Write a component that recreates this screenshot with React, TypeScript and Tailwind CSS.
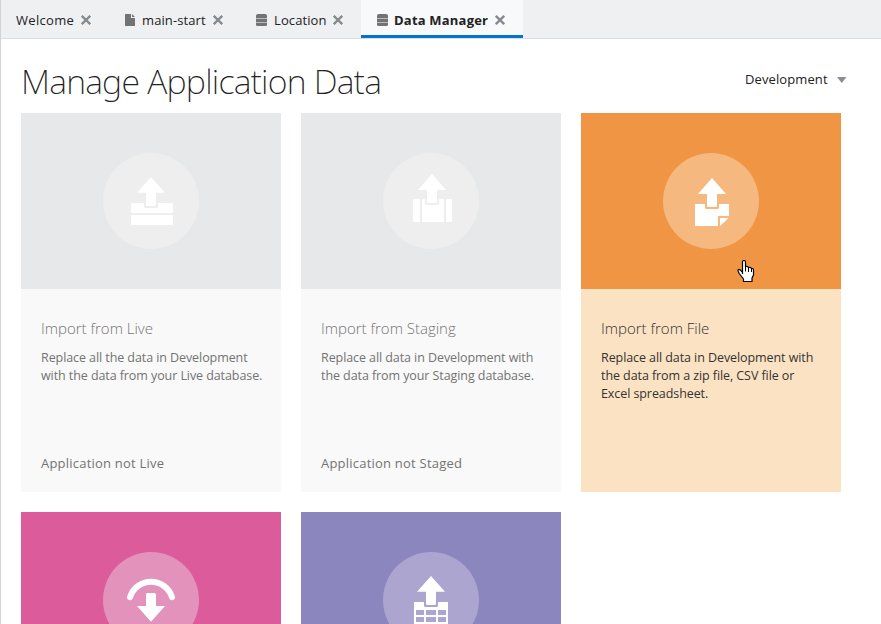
import type { ReactNode } from "react";

function CloseIcon() {
  return (
    <svg width="10" height="10" viewBox="0 0 10 10" className="shrink-0" stroke="#858a8f" strokeWidth="2.3">
      <path d="M0.8 0.8 9.2 9.2M9.2 0.8 0.8 9.2" />
    </svg>
  );
}

function DatabaseIcon() {
  return (
    <svg width="11" height="12" viewBox="0 0 11 12" className="shrink-0" fill="#737373">
      <path d="M0 4V1.500Q0 0 2 0h7q2 0 2 1.500V4z" />
      <path d="M0 5h11v3H0zM0 9h11v2q0 1-1.500 1h-8Q0 12 0 11z" />
      <path d="M0 4h11v1H0zM0 8h11v1H0z" fill="#b9babb" />
    </svg>
  );
}

function FileIcon() {
  return (
    <svg width="10" height="12" viewBox="0 0 10 12" className="shrink-0" fill="#737373">
      <path d="M0 0h6v4h4v8H0zM7 0l3 3H7z" />
    </svg>
  );
}

const liveIcon = (
  <>
    <path d="M48 24 62 39.700H53V51.500Q53 53 51.500 53h-7Q43 53 43 51.500V39.700H34z" />
    <path d="M29 50H41v3.500q0 1.500 1.500 1.500h11q1.500 0 1.500-1.500V50H69q1 0 1 1v8q0 1-1 1H29q-1 0-1-1v-8q0-1 1-1z" />
    <rect x="28" y="62" width="42" height="10" rx="1" />
  </>
);

const stagingIcon = (
  <>
    <path d="M49 21 63 37H54V48.500Q54 50 52.500 50h-7Q44 50 44 48.500V37H35z" />
    <path d="M31 46h6v23h-6q-1 0-1-1V47q0-1 1-1zM39 46h3v4.500q0 1.500 1.500 1.500h11q1.500 0 1.500-1.500V46h5v23H39zM63 46h5q1 0 1 1v21q0 1-1 1h-5z" />
  </>
);

const fileImportIcon = (
  <>
    <path d="M49 25 63 41H54V52.500Q54 54 52.500 54h-7Q44 54 44 52.500V41H35z" />
    <path d="M32 51H42v3.500q0 1.500 1.500 1.500h11q1.500 0 1.500-1.500V51H66V63H55V73H32zM57 65h8.500L57 73z" />
  </>
);

const exportIcon = (
  <>
    <path d="M27 45.200a22 22 0 0 1 42 0" fill="none" stroke="white" strokeWidth="6" strokeLinecap="round" />
    <path d="M43 54V42.500Q43 41 44.500 41h7Q53 41 53 42.500V54h9L48 69.700 34 54z" />
  </>
);

const spreadsheetIcon = (
  <>
    <path d="M48 24 62 39.700H53V51.500Q53 53 51.500 53h-7Q43 53 43 51.500V39.700H34z" />
    <path
      fillRule="evenodd"
      d="M31 50H41v3.500q0 1.500 1.500 1.500h11q1.500 0 1.500-1.500V50H65V80H31zM33 58v5h8v-5zM43 58v5h10v-5zM55 58v5h8v-5zM33 65v5h8v-5zM43 65v5h10v-5zM55 65v5h8v-5zM33 72v5h8v-5zM43 72v5h10v-5zM55 72v5h8v-5z"
    />
  </>
);

function HandCursor() {
  return (
    <svg width="18" height="23" viewBox="0 0 18 23" className="absolute left-[156px] top-[147px]">
      <path
        d="M5.500 14V2q0-1.500 1.500-1.500T8.500 2v4.500q2.500-.6 3 1 2.500-.5 3 1 2-.2 2 1.700V15l-1.500 3v3.500H6.500V19L2.200 13.500Q.3 10 1.500 9.500q1.500-.5 4 3"
        fill="white"
        stroke="black"
        strokeWidth="1.200"
        strokeLinejoin="round"
      />
      <path d="M8.500 6.500v5M11.500 7.800V12M14.500 9v3" stroke="black" fill="none" />
    </svg>
  );
}

interface CardProps {
  banner: string;
  circle: string;
  body?: string;
  heading?: string;
  title?: ReactNode;
  lines?: ReactNode;
  status?: ReactNode;
  icon: ReactNode;
  cursor?: boolean;
}

function Card({ banner, circle, body = "", heading = "", title, lines, status, icon, cursor }: CardProps) {
  return (
    <article className={`flex h-[379px] w-[260px] flex-col ${body}`}>
      <div className={`relative flex h-44 shrink-0 items-center justify-center ${banner}`}>
        <div className={`size-24 rounded-full ${circle}`}>
          <svg width="96" height="96" viewBox="0 0 96 96" fill="white">
            {icon}
          </svg>
        </div>
        {cursor && <HandCursor />}
      </div>
      <div className="flex grow flex-col px-5 pt-7 pb-[19px]">
        <h2 className={`h-[22px] text-[15px] leading-[22px] font-light whitespace-nowrap ${heading}`}>{title}</h2>
        <div className="mt-2.5 text-[12.500px] leading-[18px] tracking-[-0.08px] whitespace-nowrap">{lines}</div>
        <div className="mt-auto text-[13px] leading-5 tracking-[0.22px] whitespace-nowrap">{status}</div>
      </div>
    </article>
  );
}

export default function App() {
  return (
    <div className="h-[624px] w-[881px] overflow-hidden border-l border-[#d0d4d9] bg-white font-['Open_Sans','Noto_Sans',sans-serif] text-[#222]">
      <nav className="flex h-[39px] border-b border-[#d6dfe6] bg-[#eff0f2] text-[13px] leading-5 whitespace-nowrap">
        <div className="flex w-[108px] items-center pl-[15px] pt-px">
          <span className="w-[65px] tracking-[0.3px]">Welcome</span>
          <CloseIcon />
        </div>
        <div className="flex w-[131px] items-center pl-4 pt-px">
          <FileIcon />
          <span className="ml-[7px] w-[71px] tracking-[0.1px]">main-start</span>
          <CloseIcon />
        </div>
        <div className="flex w-[121px] items-center pl-4 pt-px">
          <DatabaseIcon />
          <span className="ml-[7px] w-[59px] tracking-[0.1px]">Location</span>
          <CloseIcon />
        </div>
        <div className="flex w-[162px] items-center border-b-3 border-[#0572ce] bg-[#f8f9fb] pt-1 pl-4">
          <DatabaseIcon />
          <span className="ml-[6px] w-[101px] font-bold tracking-[0.2px]">Data Manager</span>
          <CloseIcon />
        </div>
      </nav>
      <header className="flex h-[74px] justify-between pl-5 pr-[34px]">
        <h1 className="pt-[19px] font-['Noto_Sans','Open_Sans',sans-serif] text-[34px] leading-[46px] font-extralight tracking-[-0.76px] whitespace-nowrap">
          Manage Application Data
        </h1>
        <div className="mt-[30px] flex h-5 items-center text-[13px] leading-5">
          <span className="w-[92px] tracking-[0.1px]">Development</span>
          <svg width="10" height="7" viewBox="0 0 10 7" fill="#8a8d91">
            <path d="M0 1h9.500L4.800 7z" />
          </svg>
        </div>
      </header>
      <main className="grid w-[820px] grid-cols-[260px_260px_260px] gap-5 pl-5">
        <Card
          banner="bg-[#e6e8ea]"
          circle="bg-[#eeeeee]"
          body="bg-[#f9f9f9] text-[#737373]"
          heading="text-[#737373]"
          icon={liveIcon}
          title={<span>Import from Live</span>}
          lines={<><p>Replace all the data in Development</p><p>with the data from your Live database.</p></>}
          status={<span>Application not Live</span>}
        />
        <Card
          banner="bg-[#e6e8ea]"
          circle="bg-[#eeeeee]"
          body="bg-[#f9f9f9] text-[#737373]"
          heading="text-[#737373]"
          icon={stagingIcon}
          title={<span>Import from Staging</span>}
          lines={<><p>Replace all data in Development with</p><p>the data from your Staging database.</p></>}
          status={<span>Application not Staged</span>}
        />
        <Card
          banner="bg-[#f09544]"
          circle="bg-[#f5b87f]"
          body="bg-[#fbe2c3] text-[#333]"
          heading="text-[#333]"
          icon={fileImportIcon}
          cursor
          title={<span>Import from File</span>}
          lines={<><p>Replace all data in Development with</p><p>the data from a zip file, CSV file or</p><p>Excel spreadsheet.</p></>}
        />
        <Card banner="bg-[#dc5b9b]" circle="bg-[#e393bb]" icon={exportIcon} />
        <Card banner="bg-[#8c86be]" circle="bg-[#aca5d0]" icon={spreadsheetIcon} />
      </main>
    </div>
  );
}
